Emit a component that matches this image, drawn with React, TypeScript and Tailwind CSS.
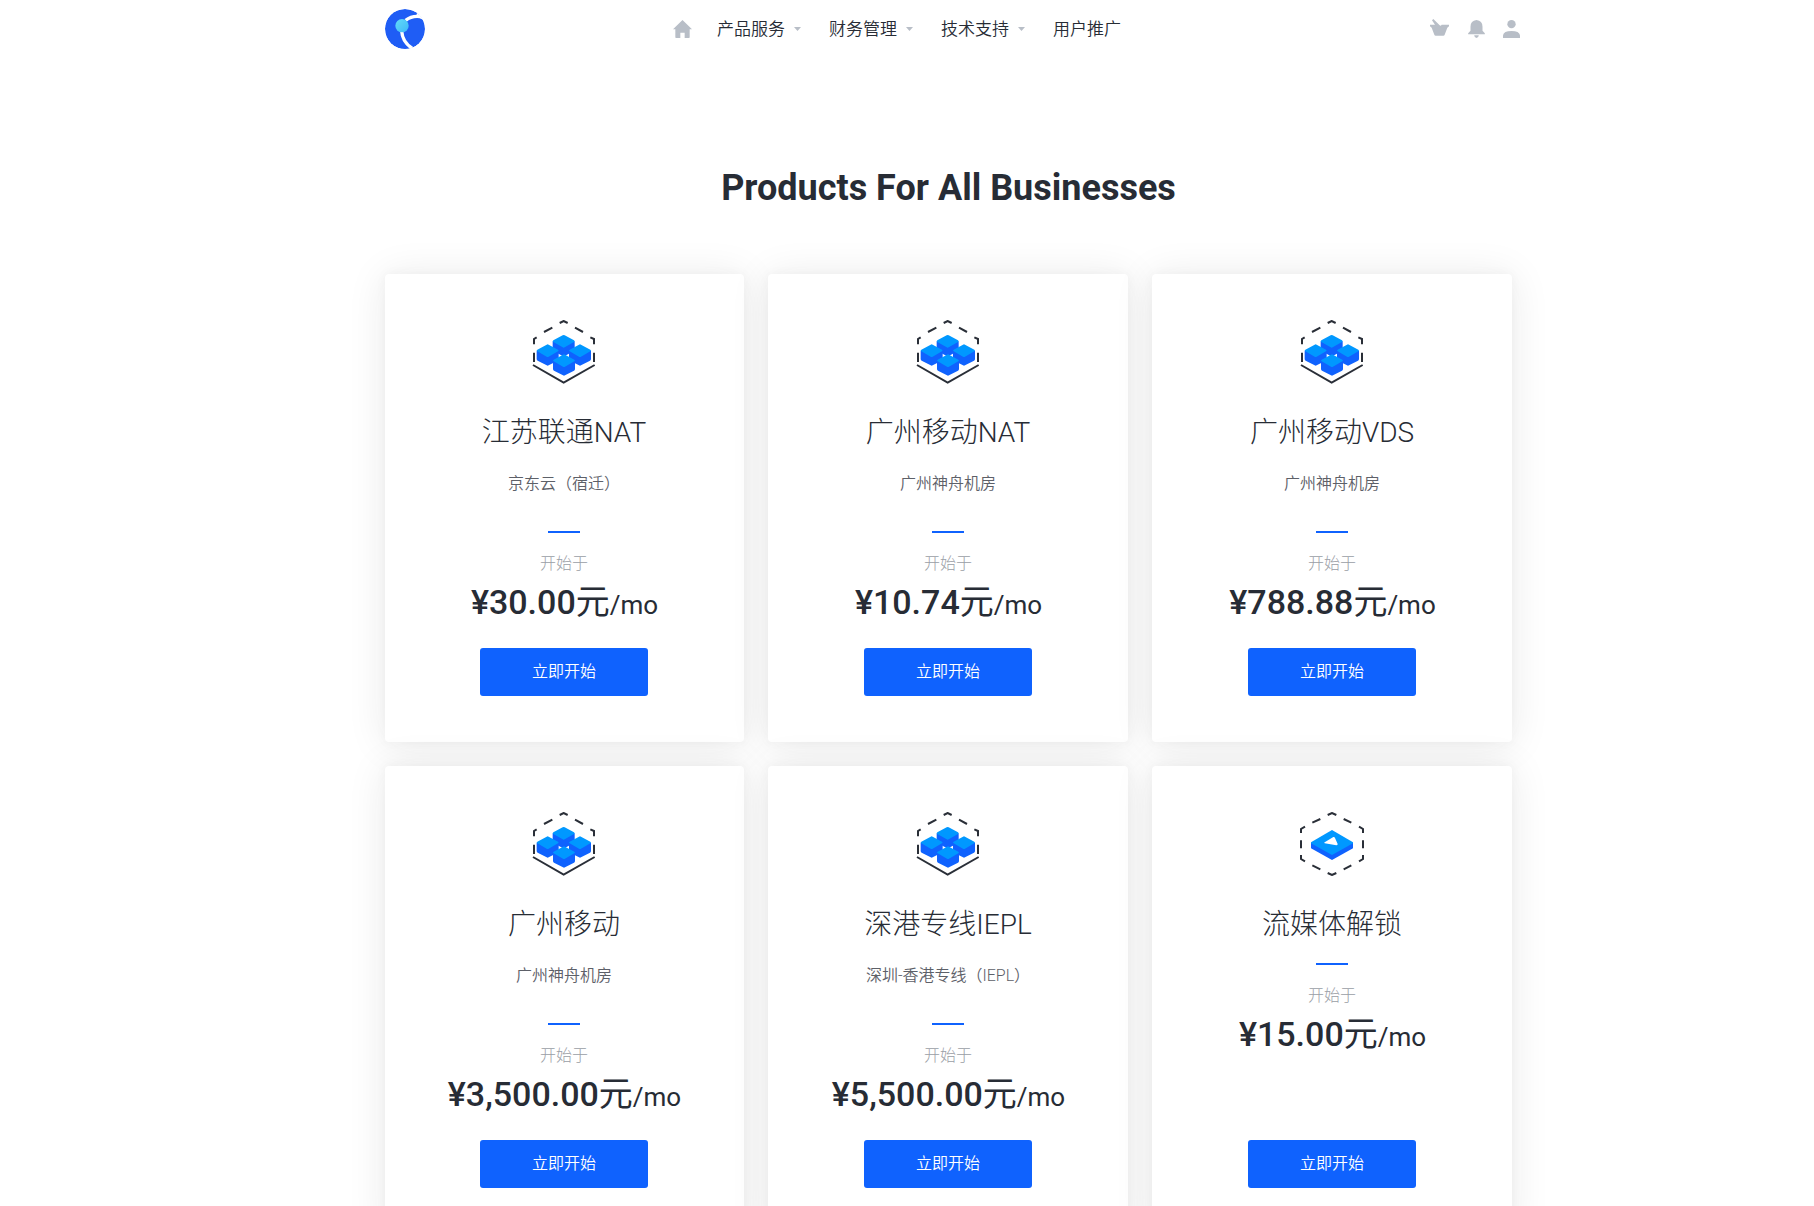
import React from "react";

type Product = { name: string; desc?: string; price: string; icon: "cubes" | "play" };

const products: Product[] = [
  { name: "江苏联通NAT", desc: "京东云（宿迁）", price: "¥30.00", icon: "cubes" },
  { name: "广州移动NAT", desc: "广州神舟机房", price: "¥10.74", icon: "cubes" },
  { name: "广州移动VDS", desc: "广州神舟机房", price: "¥788.88", icon: "cubes" },
  { name: "广州移动", desc: "广州神舟机房", price: "¥3,500.00", icon: "cubes" },
  { name: "深港专线IEPL", desc: "深圳-香港专线（IEPL）", price: "¥5,500.00", icon: "cubes" },
  { name: "流媒体解锁", price: "¥15.00", icon: "play" },
];

function Cube({ x, y }: { x: number; y: number }) {
  return (
    <g transform={`translate(${x} ${y})`}>
      <path d="M-33 0V25Q-33 28 -30 30L-3 44Q0 46 3 44L30 30Q33 28 33 25V0Z" fill="#0f62fe" />
      <path d="M-3 -18Q0 -20 3 -18L31 -3Q35 0 31 2L3 18Q0 20 -3 18L-31 2Q-35 0 -31 -3Z" fill="#0098ff" />
    </g>
  );
}

function CubesIcon() {
  return (
    <svg className="h-16 w-16" viewBox="36 45 192 192" fill="none">
      <g stroke="#2a2f38" strokeWidth="6">
        <path d="M119 54L131 48L143 54M72 81L97 68M165 68L189 81M42 118V102L50 97M211 97L222 102V118M42 143V171M222 143V171M39 180L131 233L224 180" />
      </g>
      <Cube x={131} y={109} />
      <Cube x={83} y={137} />
      <Cube x={180} y={137} />
      <Cube x={132} y={167} />
    </svg>
  );
}

function PlayIcon() {
  return (
    <svg className="h-16 w-16" viewBox="45 36 192 192" fill="none">
      <path
        d="M128 45L141 39L154 45M82 68L106 57M176 57L199 68M48 99V87L60 80M222 80L234 87V99M48 121V145M234 121V145M48 165V177L60 184M222 184L234 177V165M82 196L106 208M176 208L199 196M128 219L141 225L154 219"
        stroke="#2a2f38"
        strokeWidth="6"
      />
      <path d="M78 129V145L141 180L204 145V129Z" fill="#0f62fe" />
      <path d="M141 90L204 127V130L141 165L78 130V127Z" fill="#0098ff" />
      <path d="M119 127L145 111Q149 110 150 114L158 132Q158 136 154 136L119 130Q116 128 119 127Z" fill="#fff" />
    </svg>
  );
}

function Card({ p }: { p: Product }) {
  return (
    <div className="flex h-[468px] flex-col items-center rounded-[4px] bg-white pt-[46px] pb-[46px] text-center shadow-[0_0_12px_rgba(0,0,0,0.04),0_2px_40px_rgba(30,36,36,0.09)] [&:nth-child(3n+1)]:pr-px">
      {p.icon === "cubes" ? <CubesIcon /> : <PlayIcon />}
      <h3 className="mt-[30px] text-[28px] leading-[38px] font-light">{p.name}</h3>
      {p.desc && <p className="mt-5 mb-[35px] text-[16px] leading-[24px] font-[350] text-[#5d6068]">{p.desc}</p>}
      <div className={p.desc ? "h-[2px] w-8 bg-[#0f62fe]" : "mt-[19px] h-[2px] w-8 bg-[#0f62fe]"} />
      <div className="mt-[19px] text-[16px] leading-[24px] font-light text-[#9a9ea6]">开始于</div>
      <div className="mt-1 h-[44px] pl-px text-[34px] leading-[44px] font-medium whitespace-nowrap">
        {p.price}
        <span className="font-normal">元</span>
        <span className="text-[26px] font-normal">/mo</span>
      </div>
      <button className="mt-auto h-12 w-[168px] rounded-[3px] bg-[#0f62fe] text-[16px] font-[350] text-white">立即开始</button>
    </div>
  );
}

function NavItem({ label, menu }: { label: string; menu?: boolean }) {
  return (
    <a className="flex w-28 items-center text-[17px] leading-[24px] font-[350]">
      {label}
      {menu && (
        <svg className="ml-[9px] h-1 w-[7px]" viewBox="0 0 7 4">
          <path d="M0 0H7L3.5 4Z" fill="#b8bec7" />
        </svg>
      )}
    </a>
  );
}

export default function App() {
  return (
    <div className="h-[1206px] overflow-hidden bg-white font-[Roboto,'Noto_Sans_CJK_SC',sans-serif] text-[#272c35]">
      <header className="ml-[385px] flex h-[58px] w-[1135px] items-center">
        <svg className="h-10 w-10" viewBox="0 0 120 120">
          <defs>
            <clipPath id="disc">
              <circle cx="60" cy="60" r="60" />
            </clipPath>
            <linearGradient id="dot" x1="0" y1="0" x2="1" y2="1">
              <stop offset="0" stopColor="#62dcf8" />
              <stop offset="1" stopColor="#3fb8f8" />
            </linearGradient>
          </defs>
          <g clipPath="url(#disc)">
            <circle cx="60" cy="60" r="60" fill="#1f5df5" />
            <path d="M62 34Q82 18 112 24" fill="none" stroke="#fff" strokeWidth="10" />
            <path d="M98 4L94 20L122 38V0Z" fill="#fff" />
            <path d="M50 66Q52 100 84 120" fill="none" stroke="#fff" strokeWidth="10" />
          </g>
          <circle cx="51" cy="50" r="20" fill="url(#dot)" />
        </svg>
        <svg className="ml-[248px] h-[18px] w-[19px]" viewBox="0 0 57 54" fill="#b8bec7">
          <path d="M28.5 0L57 28H50V52Q50 54 48 54H35V38H22V54H9Q7 54 7 52V28H0Z" />
        </svg>
        <nav className="ml-[25px] flex">
          <NavItem label="产品服务" menu />
          <NavItem label="财务管理" menu />
          <NavItem label="技术支持" menu />
          <NavItem label="用户推广" />
        </nav>
        <div className="ml-auto flex items-center gap-[18.5px]">
          <svg className="mb-[2px] h-[18px] w-[19px]" viewBox="0 0 57 54" fill="#b8bec7">
            <path d="M0 17H15L6 4L10 0L29 19Q32 22 35 17H57V22L52 26L44 47Q43 50 40 50H17Q14 50 13 47L5 26L0 22Z" />
          </svg>
          <svg className="h-[18px] w-[17px]" viewBox="0 0 50 54" fill="#b8bec7">
            <path d="M25 0Q43 2 43 20V32L50 40V43H0V40L7 32V20Q7 2 25 0ZM18 46H32Q31 54 25 54T18 46Z" />
          </svg>
          <svg className="h-[18px] w-[17px]" viewBox="0 0 51 54" fill="#b8bec7">
            <circle cx="25.5" cy="12.5" r="12.5" />
            <path d="M0 54V46Q2 33 25.5 33T51 46V54Z" />
          </svg>
        </div>
      </header>
      <main className="ml-[385px] w-[1127px]">
        <h1 className="mt-[106px] h-[48px] text-center text-[36px] leading-[48px] font-bold">Products For All Businesses</h1>
        <div className="mt-[62px] grid grid-cols-[359px_360px_360px] gap-6">
          {products.map((p) => (
            <Card key={p.name} p={p} />
          ))}
        </div>
      </main>
    </div>
  );
}
